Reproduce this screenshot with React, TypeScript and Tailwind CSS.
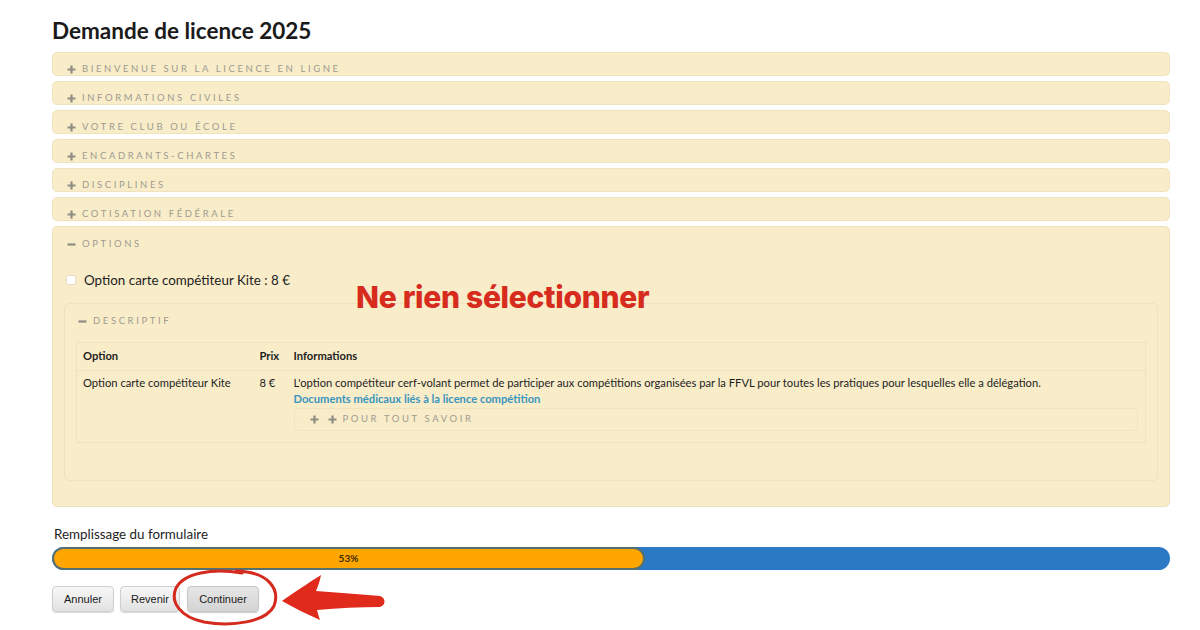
import React from "react";

const SECTIONS = [
  "Bienvenue sur la licence en ligne",
  "Informations civiles",
  "Votre club ou école",
  "Encadrants-chartes",
  "Disciplines",
  "Cotisation fédérale",
];

const FONT = { fontFamily: "Lato, 'Open Sans', sans-serif" };

function Plus() {
  return (
    <svg width="9" height="9" viewBox="0 0 9 9" className="shrink-0">
      <path d="M4.5 0.5v8M0.5 4.5h8" stroke="#8f8c82" strokeWidth="2.2" />
    </svg>
  );
}

function Minus() {
  return (
    <svg width="9" height="9" viewBox="0 0 9 9" className="shrink-0">
      <path d="M0.5 4.5h8" stroke="#8f8c82" strokeWidth="2.2" />
    </svg>
  );
}

function Legend({ open, label }: { open?: boolean; label: string }) {
  return (
    <div className="flex items-center gap-[6px]">
      {open ? <Minus /> : <Plus />}
      <span className="text-[9.5px] uppercase tracking-[2.6px] text-[#9e9b90]">{label}</span>
    </div>
  );
}

function Annotations() {
  return (
    <svg
      className="pointer-events-none absolute left-0 top-0"
      width="1200"
      height="630"
      viewBox="0 0 1200 630"
    >
      <path
        d="M236 571 C270 572 280 590 274 606 C266 622 232 627 204 622 C180 617 170 602 176 588 C184 573 212 568 242 573"
        fill="none"
        stroke="#d42b1e"
        strokeWidth="3"
        strokeLinecap="round"
      />
      <path
        d="M282 601 C296 591 310 582 321 575 C320 581 318 586 316 591 C338 593 360 594 380 596 C386 598 386 605 380 607 C360 607 338 608 317 610 C318 614 319 617 320 620 C307 614 294 608 282 601 Z"
        fill="#e02a1c"
      />
    </svg>
  );
}

export default function App() {
  return (
    <div className="relative h-[630px] w-[1200px] overflow-hidden bg-white text-[#222]" style={FONT}>
      <div className="ml-[52px] w-[1118px] pt-[17px]">
        <h1 className="text-[22.5px] font-bold leading-[28px] text-[#1a1a1a]">Demande de licence 2025</h1>

        <div className="mt-[7px] flex flex-col gap-[5px]">
          {SECTIONS.map((s) => (
            <div
              key={s}
              className="h-[24px] rounded-[5px] border border-[#f0e3be] bg-[#f8ecc9] pl-[14px] pt-[9px]"
            >
              <Legend label={s} />
            </div>
          ))}

          <div className="relative h-[281px] rounded-[5px] border border-[#eee0b9] bg-[#f8ecc9] px-[11px] pt-[10px]">
            <div className="pl-[3px]">
              <Legend open label="Options" />
            </div>

            <label className="mt-[19px] flex items-center gap-[8px] pl-[2px]">
              <span className="h-[10px] w-[10px] rounded-[2px] border border-[#e4dccb] bg-white" />
              <span className="text-[13.4px] text-[#1e1e1e]">Option carte compétiteur Kite : 8 €</span>
            </label>

            <div className="mt-[13px] h-[178px] rounded-[5px] border border-[#efe2bd] px-[11px] pt-[10px]">
              <div className="pl-[2px]">
                <Legend open label="Descriptif" />
              </div>

              <table className="mt-[13px] w-full border border-[#efe2bd] text-left text-[11.2px] text-[#1e1e1e]">
                <thead>
                  <tr className="h-[28px] border-b border-[#efe2bd] align-middle">
                    <th className="w-[177px] pl-[6px] font-bold">Option</th>
                    <th className="w-[34px] pl-[6px] font-bold">Prix</th>
                    <th className="pl-[6px] font-bold">Informations</th>
                  </tr>
                </thead>
                <tbody>
                  <tr className="align-top leading-[16px]">
                    <td className="pl-[6px] pt-[4px]">Option carte compétiteur Kite</td>
                    <td className="pl-[6px] pt-[4px]">8 €</td>
                    <td className="pb-[11px] pl-[6px] pr-[7px] pt-[4px]">
                      <div>
                        L'option compétiteur cerf-volant permet de participer aux compétitions organisées par la FFVL
                        pour toutes les pratiques pour lesquelles elle a délégation.
                      </div>
                      <div className="font-bold text-[#3a95bd]">
                        Documents médicaux liés à la licence compétition
                      </div>
                      <div className="mt-[1px] flex h-[23px] items-center gap-[9px] rounded-[4px] border border-[#efe2bd] pl-[15px]">
                        <Plus />
                        <Legend label="Pour tout savoir" />
                      </div>
                    </td>
                  </tr>
                </tbody>
              </table>
            </div>

            <div
              className="absolute left-[303px] top-[48px] text-[30px] font-extrabold tracking-[-0.3px] text-[#d62b1d]"
              style={{ fontFamily: "Inter, 'Noto Sans', sans-serif" }}
            >
              Ne rien sélectionner
            </div>
          </div>
        </div>

        <div className="mt-[17px] pl-[2px] text-[13.4px] text-[#1e1e1e]">Remplissage du formulaire</div>

        <div className="mt-[3px] h-[23px] w-full overflow-hidden rounded-full bg-[#2b78c4]">
          <div className="flex h-full w-[593px] items-center justify-center rounded-full border-2 border-[#55706f] bg-[#ffa600]">
            <span className="text-[10px] font-bold text-[#3a2a00]">53%</span>
          </div>
        </div>

        <div
          className="mt-[16px] flex gap-[6px] text-[11px] text-[#1a1a1a]"
          style={{ fontFamily: "'Liberation Sans', Arial, sans-serif" }}
        >
          <button className="h-[26px] w-[62px] rounded-[4px] border border-[#cfcfcf] bg-gradient-to-b from-[#f7f7f7] to-[#e2e2e2] shadow-[0_1px_1px_rgba(0,0,0,0.15)]">
            Annuler
          </button>
          <button className="h-[26px] w-[60px] rounded-[4px] border border-[#cfcfcf] bg-gradient-to-b from-[#f7f7f7] to-[#e2e2e2] shadow-[0_1px_1px_rgba(0,0,0,0.15)]">
            Revenir
          </button>
          <button className="ml-[1px] h-[26px] w-[72px] rounded-[4px] border border-[#c6c6c6] bg-gradient-to-b from-[#e6e6e6] to-[#d4d4d4] shadow-[0_1px_1px_rgba(0,0,0,0.2)]">
            Continuer
          </button>
        </div>
      </div>

      <Annotations />
    </div>
  );
}
